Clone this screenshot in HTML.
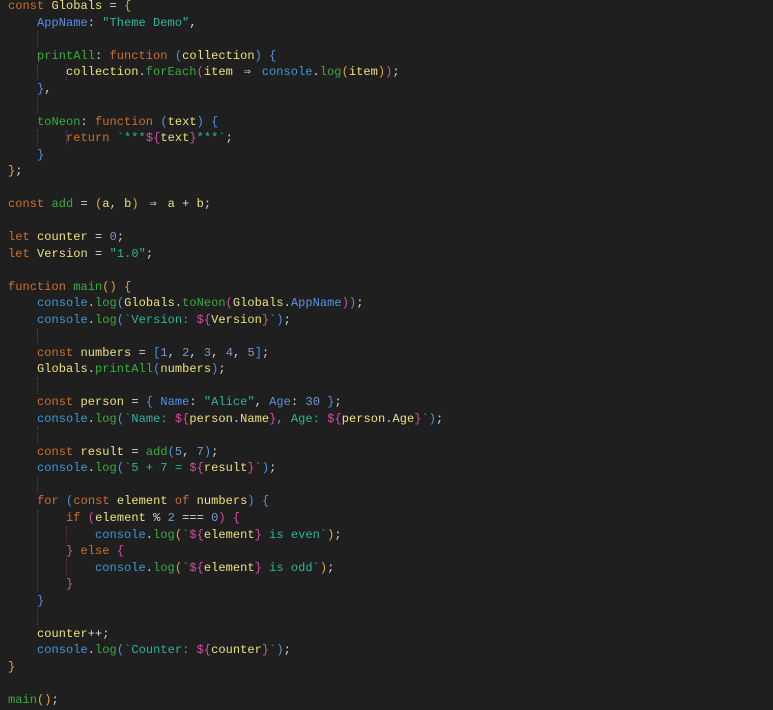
<!DOCTYPE html><html><head><meta charset="utf-8"><style>
html,body{margin:0;padding:0;background:#1f1f1f;width:773px;height:710px;overflow:hidden}
pre{margin:0;position:absolute;left:8px;top:-2px;font-family:"Liberation Mono","DejaVu Sans Mono",monospace;font-size:12px;line-height:16.52px;color:#d4d4d4;letter-spacing:0.05px}
.k{color:#cf6f2c}.v{color:#ece27c}.p{color:#5b8fe6}.s{color:#2db59b}.f{color:#36ad3f}.c{color:#3a9ad6}.n{color:#7898cc}.y{color:#e2a73a}.b{color:#4e94e0}.m{color:#db4aa6}
.a{display:inline-block;width:2ch;text-align:center}
.g{position:absolute;width:0;border-left:1px dotted #4d3f70}
.g2{border-left-color:#6a3350}
</style></head><body>
<div class="g" style="left:37px;top:31px;height:16px"></div>
<div class="g" style="left:37px;top:64px;height:16px"></div>
<div class="g" style="left:37px;top:97px;height:16px"></div>
<div class="g" style="left:37px;top:130px;height:16px"></div>
<div class="g" style="left:37px;top:328px;height:16px"></div>
<div class="g" style="left:37px;top:378px;height:16px"></div>
<div class="g" style="left:37px;top:427px;height:16px"></div>
<div class="g" style="left:37px;top:477px;height:16px"></div>
<div class="g" style="left:37px;top:510px;height:82px"></div>
<div class="g" style="left:37px;top:609px;height:16px"></div>
<div class="g" style="left:66px;top:64px;height:16px"></div>
<div class="g" style="left:66px;top:130px;height:16px"></div>
<div class="g g2" style="left:66px;top:526px;height:16px"></div>
<div class="g g2" style="left:66px;top:559px;height:16px"></div>
<pre><span class="k">const</span> <span class="v">Globals</span> = <span class="y">{</span>
    <span class="p">AppName</span>: <span class="s">"Theme Demo"</span>,

    <span class="f">printAll</span>: <span class="k">function</span> <span class="b">(</span><span class="v">collection</span><span class="b">)</span> <span class="b">{</span>
        <span class="v">collection</span>.<span class="f">forEach</span><span class="m">(</span><span class="v">item</span> <span class="a">⇒</span> <span class="c">console</span>.<span class="f">log</span><span class="y">(</span><span class="v">item</span><span class="y">)</span><span class="m">)</span>;
    <span class="b">}</span>,

    <span class="f">toNeon</span>: <span class="k">function</span> <span class="b">(</span><span class="v">text</span><span class="b">)</span> <span class="b">{</span>
        <span class="k">return</span> <span class="s">`***</span><span class="m">${</span><span class="v">text</span><span class="m">}</span><span class="s">***`</span>;
    <span class="b">}</span>
<span class="y">}</span>;

<span class="k">const</span> <span class="f">add</span> = <span class="y">(</span><span class="v">a</span>, <span class="v">b</span><span class="y">)</span> <span class="a">⇒</span> <span class="v">a</span> + <span class="v">b</span>;

<span class="k">let</span> <span class="v">counter</span> = <span class="n">0</span>;
<span class="k">let</span> <span class="v">Version</span> = <span class="s">"1.0"</span>;

<span class="k">function</span> <span class="f">main</span><span class="y">()</span> <span class="y">{</span>
    <span class="c">console</span>.<span class="f">log</span><span class="b">(</span><span class="v">Globals</span>.<span class="f">toNeon</span><span class="m">(</span><span class="v">Globals</span>.<span class="p">AppName</span><span class="m">)</span><span class="b">)</span>;
    <span class="c">console</span>.<span class="f">log</span><span class="b">(</span><span class="s">`Version: </span><span class="m">${</span><span class="v">Version</span><span class="m">}</span><span class="s">`</span><span class="b">)</span>;

    <span class="k">const</span> <span class="v">numbers</span> = <span class="b">[</span><span class="n">1</span>, <span class="n">2</span>, <span class="n">3</span>, <span class="n">4</span>, <span class="n">5</span><span class="b">]</span>;
    <span class="v">Globals</span>.<span class="f">printAll</span><span class="b">(</span><span class="v">numbers</span><span class="b">)</span>;

    <span class="k">const</span> <span class="v">person</span> = <span class="b">{</span> <span class="p">Name</span>: <span class="s">"Alice"</span>, <span class="p">Age</span>: <span class="n">30</span> <span class="b">}</span>;
    <span class="c">console</span>.<span class="f">log</span><span class="b">(</span><span class="s">`Name: </span><span class="m">${</span><span class="v">person</span>.<span class="v">Name</span><span class="m">}</span><span class="s">, Age: </span><span class="m">${</span><span class="v">person</span>.<span class="v">Age</span><span class="m">}</span><span class="s">`</span><span class="b">)</span>;

    <span class="k">const</span> <span class="v">result</span> = <span class="f">add</span><span class="b">(</span><span class="n">5</span>, <span class="n">7</span><span class="b">)</span>;
    <span class="c">console</span>.<span class="f">log</span><span class="b">(</span><span class="s">`5 + 7 = </span><span class="m">${</span><span class="v">result</span><span class="m">}</span><span class="s">`</span><span class="b">)</span>;

    <span class="k">for</span> <span class="b">(</span><span class="k">const</span> <span class="v">element</span> <span class="k">of</span> <span class="v">numbers</span><span class="b">)</span> <span class="b">{</span>
        <span class="k">if</span> <span class="m">(</span><span class="v">element</span> % <span class="n">2</span> === <span class="n">0</span><span class="m">)</span> <span class="m">{</span>
            <span class="c">console</span>.<span class="f">log</span><span class="y">(</span><span class="s">`</span><span class="m">${</span><span class="v">element</span><span class="m">}</span><span class="s"> is even`</span><span class="y">)</span>;
        <span class="m">}</span> <span class="k">else</span> <span class="m">{</span>
            <span class="c">console</span>.<span class="f">log</span><span class="y">(</span><span class="s">`</span><span class="m">${</span><span class="v">element</span><span class="m">}</span><span class="s"> is odd`</span><span class="y">)</span>;
        <span class="m">}</span>
    <span class="b">}</span>

    <span class="v">counter</span>++;
    <span class="c">console</span>.<span class="f">log</span><span class="b">(</span><span class="s">`Counter: </span><span class="m">${</span><span class="v">counter</span><span class="m">}</span><span class="s">`</span><span class="b">)</span>;
<span class="y">}</span>

<span class="f">main</span><span class="y">()</span>;</pre></body></html>
